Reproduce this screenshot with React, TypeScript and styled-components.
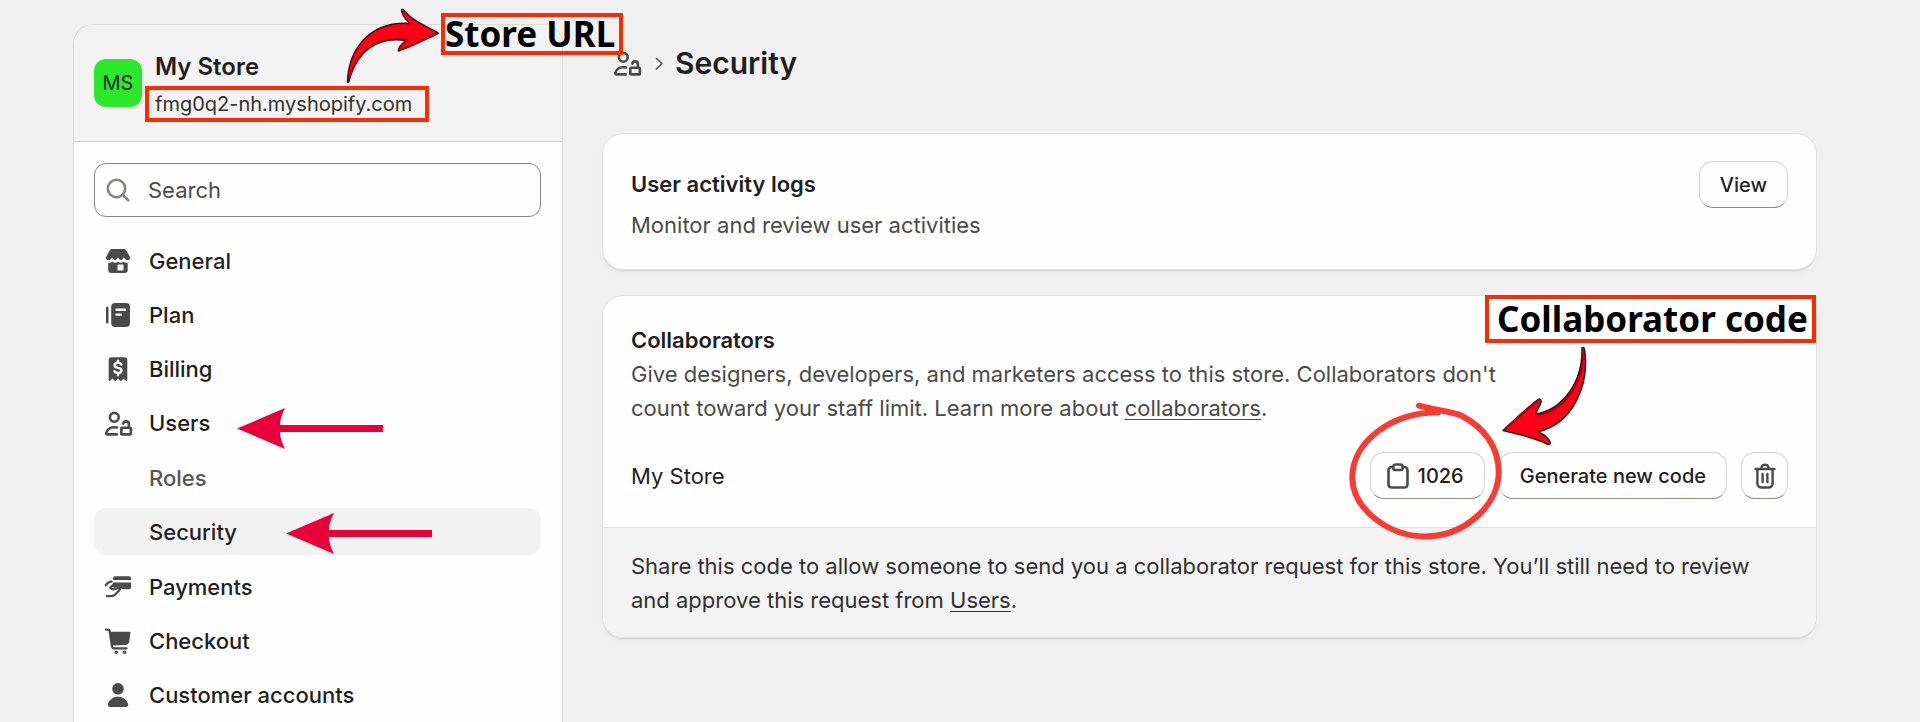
import React from 'react';
import styled, { createGlobalStyle, css } from 'styled-components';

const GlobalStyle = createGlobalStyle`
  * { box-sizing: border-box; }
  body {
    margin: 0;
    background: #f0f0f0;
    color: #1f1f1f;
    font-family: Inter, "Liberation Sans", sans-serif;
    font-size: 22px;
    line-height: 34px;
  }
`;

const Page = styled.div`
  display: flex;
  gap: 40px;
  min-height: 100vh;
  padding: 24px 104px 0 73px;
`;

/* ---------- sidebar ---------- */

const Sidebar = styled.aside`
  display: flex;
  flex-direction: column;
  flex: 0 0 490px;
  border: 1px solid #dcdbd9;
  border-bottom: 0;
  border-radius: 20px 20px 0 0;
  background: #fefefe;
`;

const StoreHeader = styled.header`
  position: relative;
  display: flex;
  align-items: center;
  gap: 3px;
  height: 117px;
  padding: 0 20px;
  border-bottom: 1px solid #cfcdc8;
  border-radius: 20px 20px 0 0;
  background: #f3f3f3;
`;

const Avatar = styled.div`
  display: grid;
  place-items: center;
  width: 48px;
  height: 48px;
  border-radius: 12px;
  background: #2be82b;
  font-size: 20px;
`;

const StoreText = styled.div`
  display: flex;
  flex-direction: column;
  gap: 5px;
  padding-top: 8px;
`;

const StoreName = styled.strong`
  padding-left: 10px;
  font-size: 24px;
  font-weight: 600;
  line-height: 28px;
`;

const StoreUrl = styled.span`
  padding: 0 13px 0 6px;
  border: 4px solid #ff2a00;
  color: #303030;
  font-size: 20px;
  line-height: 28px;
`;

const SidebarBody = styled.div`
  padding: 21px 21px 4px 20px;
`;

const SearchField = styled.label`
  display: flex;
  align-items: center;
  height: 54px;
  margin-bottom: 20px;
  padding-left: 11px;
  border: 1px solid #8a8784;
  border-radius: 12px;
`;

const SearchInput = styled.input`
  flex: 1;
  min-width: 0;
  padding: 0 18px;
  border: 0;
  outline: 0;
  background: transparent;
  color: #303030;
  font: inherit;
  &::placeholder { color: #4a4a4a; opacity: 1; }
`;

const NavList = styled.ul`
  display: flex;
  flex-direction: column;
  gap: 7px;
  margin: 0;
  padding: 0;
  list-style: none;
`;

const SubList = styled(NavList)`
  padding: 8px 0 1px;
`;

const NavLink = styled.a<{ $sub?: boolean; $active?: boolean }>`
  position: relative;
  display: flex;
  align-items: center;
  gap: 14px;
  height: 47px;
  padding-left: ${(p) => (p.$sub ? 55 : 7)}px;
  border-radius: 12px;
  background: ${(p) => (p.$active ? '#f2f2f2' : 'transparent')};
  color: ${(p) => (p.$sub && !p.$active ? '#555' : '#1f1f1f')};
  font-weight: 500;
  text-decoration: none;
`;

/* ---------- main column ---------- */

const Main = styled.main`
  display: flex;
  flex-direction: column;
  flex: 1;
  min-width: 0;
  padding-top: 19px;
`;

const TitleBar = styled.div`
  display: flex;
  align-items: center;
  height: 40px;
  margin-bottom: 51px;
  padding-left: 7px;
`;

const Crumbs = styled.div`
  display: flex;
  align-items: center;
  gap: 4px;
`;

const Title = styled.h1`
  margin: 0;
  padding-left: 5px;
  font-size: 30px;
  font-weight: 600;
  line-height: 40px;
`;

const cardEdge = css`
  border-radius: 20px;
  box-shadow: 0 0 0 1px #e0e0e0, 0 2px 1px #d2d2d2, 0 4px 8px rgba(0, 0, 0, 0.03);
`;

const Card = styled.section`
  ${cardEdge}
  position: relative;
  margin-bottom: 27px;
  background: #fefefe;
`;

const CardBody = styled.div`
  padding: 27px 28px 19px;
`;

const CollabBody = styled(CardBody)`
  padding-bottom: 28px;
`;

const Row = styled.div<{ $top?: boolean }>`
  display: flex;
  align-items: ${(p) => (p.$top ? 'flex-start' : 'center')};
  justify-content: space-between;
`;

const CodeRow = styled(Row)`
  margin-top: 27px;
`;

const ActivityText = styled.div`
  display: flex;
  flex-direction: column;
  gap: 7px;
  padding: 6px 0 8px;
`;

const CardTitle = styled.h2`
  margin: 0;
  font-size: 22px;
  font-weight: 600;
  line-height: 34px;
`;

const Text = styled.p`
  max-width: 900px;
  margin: 0;
  color: #4a4a4a;
`;

const CardFooter = styled.footer`
  padding: 21px 28px 20px;
  border-top: 1px solid #dedede;
  border-radius: 0 0 20px 20px;
  background: #f3f3f3;
  color: #303030;
`;

const InlineLink = styled.a`
  color: inherit;
  text-decoration: underline;
  text-decoration-thickness: 1px;
  text-underline-offset: 3px;
`;

const Actions = styled.div`
  display: flex;
  gap: 14px;
`;

const Button = styled.button<{ $icon?: boolean; $square?: boolean }>`
  display: flex;
  align-items: center;
  justify-content: center;
  gap: 9px;
  height: 47px;
  width: ${(p) => (p.$square ? '47px' : 'auto')};
  padding: 0 ${(p) => (p.$square ? 0 : 20)}px;
  ${(p) => p.$icon && 'padding-left: 16px;'}
  border: 1px solid #d4d2d0;
  border-bottom-color: #8c8987;
  border-radius: 14px;
  background: #fefefe;
  color: #1f1f1f;
  font: inherit;
  font-size: 20px;
  font-weight: 500;
  cursor: pointer;
`;

/* ---------- annotations lying over the page ---------- */

const Callout = styled.div`
  position: absolute;
  z-index: 2;
  border: 4px solid #ff2a00;
  color: #000;
  font-family: "Noto Sans", "Open Sans", sans-serif;
  font-size: 35px;
  font-weight: 700;
  white-space: nowrap;
`;

const UrlCallout = styled(Callout)`
  top: -12px;
  left: 367px;
  width: 182px;
  line-height: 34px;
`;

const CodeCallout = styled(Callout)`
  top: -1px;
  right: 0;
  width: 331px;
  padding-left: 8px;
  line-height: 40px;
`;

const Mark = styled.svg`
  position: absolute;
  z-index: 1;
  overflow: visible;
  pointer-events: none;
`;

const UrlArrow = styled(Mark)`
  top: -19px;
  left: 270px;
`;

const CodeArrow = styled(Mark)`
  top: 50px;
  right: 228px;
`;

const CodeCircle = styled(Mark)`
  top: 106px;
  right: 314px;
`;

const PointerMark = styled(Mark)<{ $left: number; $top: number }>`
  top: ${(p) => p.$top}px;
  left: ${(p) => p.$left}px;
`;

const Pointer = ({ left, top }: { left: number; top: number }) => (
  <PointerMark $left={left} $top={top} width="146" height="41" viewBox="0 0 146 41" aria-hidden="true">
    <path d="M0 20.5 48 0Q43 10 43 17H146V24H43Q43 31 48 41Z" fill="#e8003a" />
  </PointerMark>
);

/* ---------- icons ---------- */

const IconBox = ({ children }: { children: React.ReactNode }) => (
  <svg width="34" height="34" viewBox="0 0 34 34" fill="#4a4a4a" aria-hidden="true">
    {children}
  </svg>
);

const line = { fill: 'none', stroke: '#4a4a4a', strokeWidth: 2.6, strokeLinecap: 'round', strokeLinejoin: 'round' } as const;

const StoreIcon = () => (
  <IconBox>
    <path d="M12 5h10c1.700 0 2.800.6 3.600 2l2.900 5.200c1.300 2.300.2 4-1.900 4-1.600 0-2.700-1-3.800-3-.9 1.700-1.700 2.900-2.900 2.900-1.200 0-2-1.200-2.900-2.900-.9 1.700-1.700 2.900-2.900 2.900-1.200 0-2-1.200-2.900-2.900-1.100 2-2.200 3-3.800 3-2.100 0-3.200-1.700-1.900-4L8.400 7C9.200 5.600 10.300 5 12 5Z" />
    <path fillRule="evenodd" d="M7.200 18.800c1.500.2 3-.2 4.200-1.400 1.700 1.700 3.900 1.700 5.600 0 1.700 1.700 3.900 1.700 5.600 0 1.200 1.200 2.600 1.600 4.100 1.400V26a3 3 0 0 1-3 3H10.200a3 3 0 0 1-3-3ZM17.300 20.500c-.5 0-.8.300-.8.800v5.200h6v-5.200c0-.5-.3-.8-.8-.8Z" />
  </IconBox>
);

const PlanIcon = () => (
  <IconBox>
    <rect x="5" y="8.500" width="2.500" height="17" rx="1.200" />
    <rect x="10.200" y="5" width="18.800" height="24" rx="4" />
    <path d="M15.500 11.800H24M15.500 16.600H20" stroke="#fff" strokeWidth="2.400" strokeLinecap="round" />
  </IconBox>
);

const BillingIcon = () => (
  <IconBox>
    <path d="M10.500 5.200h13a2.800 2.800 0 0 1 2.800 2.800v20.200c0 .8-.8 1-1.400.5L22.600 26.500l-2.200 2.300c-.5.400-.9.400-1.300 0L17 26.500l-2.100 2.300c-.4.400-.8.400-1.300 0L11.400 26.500l-2.300 2.200c-.6.500-1.400.3-1.400-.5V8a2.800 2.800 0 0 1 2.800-2.800Z" />
    <path d="M20.500 12.700c-.6-1.300-1.800-2-3.500-2-2 0-3.400 1-3.400 2.600 0 1.800 1.500 2.300 3.400 2.600 2 .3 3.500.9 3.500 2.600 0 1.600-1.400 2.500-3.400 2.500-1.900 0-3.100-.7-3.700-2M17 8.600v2M17 21.200v2" fill="none" stroke="#fff" strokeWidth="2.400" strokeLinecap="round" />
  </IconBox>
);

const UsersIcon = () => (
  <IconBox>
    <g {...line}>
      <circle cx="13.300" cy="11.300" r="4.400" />
      <path d="M16 21.500c-5.500-1-9.500 1.300-10.700 5.300-.2.900.2 1.600 1.100 1.600h9.300" />
      <rect x="20.300" y="21.800" width="9.600" height="6.600" rx="1" />
      <path d="M22.400 17.600c.2-1.400 1.200-2.200 2.700-2.200 1.700 0 2.800 1.100 2.800 2.800v3.300" />
    </g>
  </IconBox>
);

const PaymentsIcon = () => (
  <IconBox>
    <path d="M14 6.300h14a2 2 0 0 1 2 2v1.800H12V8.300a2 2 0 0 1 2-2ZM12 12.400h18v4.900a2 2 0 0 1-2 2h-7.600l.9-1.600c.7-1.300-.2-2.300-1.500-1.900l-5.600 1.900c-.8.300-1.700-.2-2.200-.8Z" />
    <path d="M4.700 15.300c1.300-2.300 3.300-3.500 6-3.600M9.300 17.600l3.200-3M9.300 18c2 2 4.500 1.500 7 .3l4.500-2c-1.700 3.500-4 6.100-7 8.500-1.300 1.100-2.700 1.300-4.500 1.300H5.800" {...line} strokeWidth={2.200} />
  </IconBox>
);

const CartIcon = () => (
  <IconBox>
    <path d="M9 7.700h19.300c.8 0 1.200.5 1.100 1.300l-1.100 8.300c-.3 2.200-1.700 3.500-3.900 3.700l-13.200.6Z" />
    <path d="M5 5.700h2c1 0 1.500.4 1.700 1.400l2.200 15c.2 1.500 1 2.200 2.400 2.200h12.200" {...line} strokeWidth={2.200} />
    <circle cx="15.300" cy="28.300" r="1.700" />
    <circle cx="23.500" cy="28.300" r="1.700" />
  </IconBox>
);

const PersonIcon = () => (
  <IconBox>
    <circle cx="17" cy="10.800" r="5.800" />
    <path d="M9.500 29c-2.200 0-3.200-1.500-2.500-3.300 1.500-4.300 5.300-7 10-7s8.500 2.700 10 7c.7 1.800-.3 3.300-2.500 3.300Z" />
  </IconBox>
);

const SearchIcon = () => (
  <svg width="24" height="24" viewBox="0 0 24 24" fill="none" stroke="#85827f" strokeWidth="2.600" strokeLinecap="round" aria-hidden="true">
    <circle cx="10.500" cy="10.500" r="8.700" />
    <path d="m17 17 5.300 5.300" />
  </svg>
);

const ChevronIcon = () => (
  <svg width="22" height="22" viewBox="0 0 22 22" fill="none" stroke="#5c5c5c" strokeWidth="1.600" strokeLinecap="round" strokeLinejoin="round" aria-hidden="true">
    <path d="m8.500 6.500 5.500 5.200-5.500 5.200" />
  </svg>
);

const ClipboardIcon = () => (
  <svg width="22" height="26" viewBox="0 0 22 26" {...line} aria-hidden="true">
    <path d="M6 4H4.500a3 3 0 0 0-3 3v14.500a3 3 0 0 0 3 3h13a3 3 0 0 0 3-3V7a3 3 0 0 0-3-3H16" />
    <rect x="6.300" y="1.500" width="9.400" height="5.500" rx="2.200" />
  </svg>
);

const TrashIcon = () => (
  <svg width="22" height="26" viewBox="0 0 22 26" {...line} strokeWidth={2.400} aria-hidden="true">
    <path d="M1.500 6h19M7.300 5.500c.2-2.500 1.700-3.900 3.700-3.900s3.500 1.400 3.700 3.900M3.400 6.500v14a4 4 0 0 0 4 4h7.200a4 4 0 0 0 4-4v-14M8.600 11v8M13.400 11v8" />
  </svg>
);

const topItems = [
  { label: 'General', icon: <StoreIcon /> },
  { label: 'Plan', icon: <PlanIcon /> },
  { label: 'Billing', icon: <BillingIcon /> },
];

const lowerItems = [
  { label: 'Payments', icon: <PaymentsIcon /> },
  { label: 'Checkout', icon: <CartIcon /> },
  { label: 'Customer accounts', icon: <PersonIcon /> },
];

export default function App() {
  return (
    <>
      <GlobalStyle />
      <Page>
        <Sidebar>
          <StoreHeader>
            <Avatar>MS</Avatar>
            <StoreText>
              <StoreName>My Store</StoreName>
              <StoreUrl>fmg0q2-nh.myshopify.com</StoreUrl>
            </StoreText>
            <UrlArrow width="96" height="80" viewBox="344 6 96 80" aria-hidden="true">
              <path d="M347.500 82C348.500 52 367 21 410 23.500 406 20 402 15 401.500 9.800 402.500 8.500 404 10 405 11.500 413 22 427 26 438.500 33.300 424 40 412 46.500 398.500 51 398 47 402 43.500 406 40.500 378 36 357 50 348.500 82.500Z" fill="#ff0014" stroke="#33111a" strokeWidth="1.500" strokeLinejoin="round" />
              <path d="M349.500 77C359 47 380 35.500 408 39.500M401 49.500C414 45 424 39 436 34" fill="none" stroke="#ad0018" strokeWidth="1.600" />
            </UrlArrow>
            <UrlCallout>Store URL</UrlCallout>
          </StoreHeader>
          <SidebarBody>
            <SearchField>
              <SearchIcon />
              <SearchInput type="search" placeholder="Search" aria-label="Search" />
            </SearchField>
            <nav>
              <NavList>
                {topItems.map((item) => (
                  <li key={item.label}>
                    <NavLink href="#">{item.icon}{item.label}</NavLink>
                  </li>
                ))}
                <li>
                  <NavLink href="#"><UsersIcon />Users<Pointer left={143} top={9} /></NavLink>
                  <SubList>
                    <li><NavLink href="#" $sub>Roles</NavLink></li>
                    <li><NavLink href="#" $sub $active aria-current="page">Security<Pointer left={192} top={5} /></NavLink></li>
                  </SubList>
                </li>
                {lowerItems.map((item) => (
                  <li key={item.label}>
                    <NavLink href="#">{item.icon}{item.label}</NavLink>
                  </li>
                ))}
              </NavList>
            </nav>
          </SidebarBody>
        </Sidebar>

        <Main>
          <TitleBar>
            <Crumbs>
              <UsersIcon />
              <ChevronIcon />
            </Crumbs>
            <Title>Security</Title>
          </TitleBar>

          <Card>
            <CardBody>
              <Row $top>
                <ActivityText>
                  <CardTitle>User activity logs</CardTitle>
                  <Text>Monitor and review user activities</Text>
                </ActivityText>
                <Button type="button">View</Button>
              </Row>
            </CardBody>
          </Card>

          <Card>
            <CollabBody>
              <CardTitle>Collaborators</CardTitle>
              <Text>
                Give designers, developers, and marketers access to this store. Collaborators don't count toward
                your staff limit. Learn more about <InlineLink href="#">collaborators</InlineLink>.
              </Text>
              <CodeRow>
                <span>My Store</span>
                <Actions>
                  <Button type="button" $icon><ClipboardIcon />1026</Button>
                  <Button type="button">Generate new code</Button>
                  <Button type="button" $square aria-label="Delete code"><TrashIcon /></Button>
                </Actions>
              </CodeRow>
            </CollabBody>
            <CardFooter>
              Share this code to allow someone to send you a collaborator request for this store. You’ll still need to
              review and approve this request from <InlineLink href="#">Users</InlineLink>.
            </CardFooter>
            <CodeCallout>Collaborator code</CodeCallout>
            <CodeArrow width="86" height="100" viewBox="1502 346 86 100" aria-hidden="true">
              <path d="M1582 348Q1583.500 346.500 1584.500 349C1590 386 1572 424 1538 431.700 1543 434 1549 438 1550.500 443 1550 445 1548 444.500 1546 443.500 1533 437 1518 434 1503 430.500 1514 420 1527 408 1538 399.500 1540 398 1541.500 400 1541 402 1540 406 1536.500 410 1536 414 1561 410 1583 384 1582 348Z" fill="#ff0014" stroke="#33111a" strokeWidth="1.500" strokeLinejoin="round" />
              <path d="M1505 429.500C1516 419 1527 409 1539 400.500M1537 415.500C1563 411 1584 386 1583 351" fill="none" stroke="#ad0018" strokeWidth="1.800" />
            </CodeArrow>
            <CodeCircle width="154" height="138" viewBox="1348 402 154 138" aria-hidden="true">
              <path d="M1419 405.700C1434 410 1455 412 1462 416 1483 427 1499 446 1498.700 473 1498 506 1464 536.500 1425 536.500 1390 536.500 1353 510 1352.300 478 1352 440 1394 412 1438 412.500" fill="none" stroke="#fb3b30" strokeWidth="6" strokeLinecap="round" strokeLinejoin="round" />
            </CodeCircle>
          </Card>
        </Main>
      </Page>
    </>
  );
}
